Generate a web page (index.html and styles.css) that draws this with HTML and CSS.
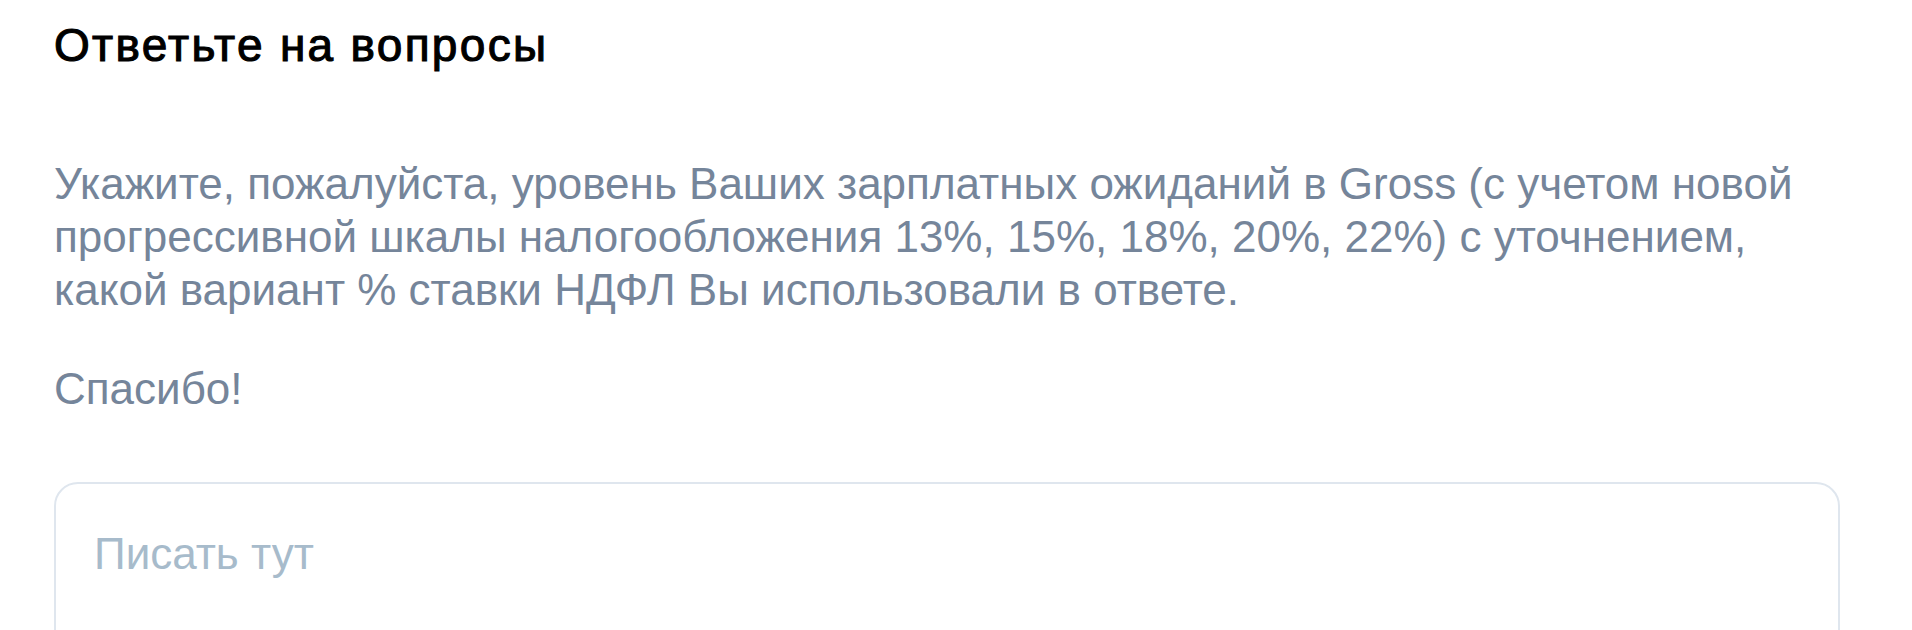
FILE: index.html
```html
<!DOCTYPE html>
<html lang="ru">
<head>
<meta charset="utf-8">
<title>Ответьте на вопросы</title>
<link rel="stylesheet" href="styles.css">
</head>
<body>
<main class="page">
  <h1 class="title">Ответьте на вопросы</h1>
  <div class="question">
    <p class="question-text">Укажите, пожалуйста, уровень Ваших зарплатных ожиданий в Gross (с учетом новой прогрессивной шкалы налогообложения 13%, 15%, 18%, 20%, 22%) с уточнением, какой вариант % ставки НДФЛ Вы использовали в ответе.</p>
    <p class="question-text">Спасибо!</p>
  </div>
  <textarea class="answer" placeholder="Писать тут"></textarea>
</main>
</body>
</html>
```

FILE: styles.css
```css
html, body {
  margin: 0;
  padding: 0;
  background: #ffffff;
}

.page {
  box-sizing: border-box;
  width: 1912px;
  padding: 19px 72px 0 54px;
  font-family: "Liberation Sans", Arial, sans-serif;
  display: flex;
  flex-direction: column;
}

.title {
  margin: 0;
  font-size: 46px;
  line-height: 53px;
  font-weight: 400;
  letter-spacing: 2.3px;
  -webkit-text-stroke: 1.1px #000000;
  color: #000000;
}

.question {
  margin-top: 85px;
  display: flex;
  flex-direction: column;
  gap: 46px;
}

.question-text {
  margin: 0;
  font-size: 44px;
  line-height: 53px;
  color: #75859a;
}

.answer {
  display: block;
  box-sizing: border-box;
  margin-top: 67px;
  width: 100%;
  height: 240px;
  padding: 44px 38px;
  border: 2px solid #dfe6ee;
  border-radius: 24px;
  font-family: "Liberation Sans", Arial, sans-serif;
  font-size: 44px;
  line-height: 52px;
  color: #1a1a1a;
  resize: none;
  outline: none;
  background: #ffffff;
}

.answer::placeholder {
  color: #a7bbcb;
  opacity: 1;
}
```
